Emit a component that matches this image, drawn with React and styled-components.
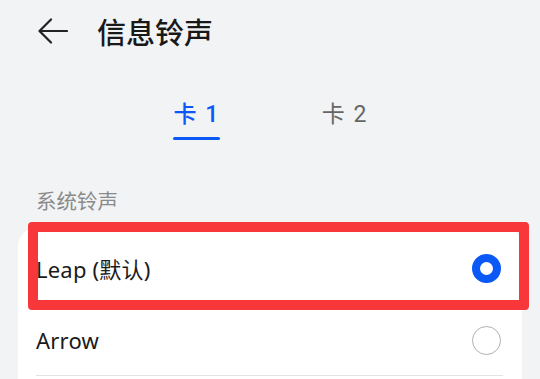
import React, { useState } from "react";
import styled, { createGlobalStyle } from "styled-components";

const Global = createGlobalStyle`
  html, body { margin: 0; padding: 0; background: #f1f3f5; }
  body { font-family: "Noto Sans", "Noto Sans CJK SC", sans-serif; }
`;

const Page = styled.div`
  width: 540px;
  height: 379px;
  overflow: hidden;
  background: #f1f3f5;
`;

const Header = styled.div`
  height: 62px;
  display: flex;
  align-items: center;
  padding-left: 38px;
  gap: 29px;
`;

const BackButton = styled.div`
  width: 30px;
  height: 28px;
  display: flex;
  align-items: center;
  justify-content: center;
`;

const Title = styled.div`
  font-family: "Noto Sans CJK SC", sans-serif;
  font-size: 29px;
  font-weight: 500;
  color: #191919;
  line-height: 36px;
`;

const Tabs = styled.div`
  display: flex;
  justify-content: center;
  padding-top: 38px;
`;

const Tab = styled.div`
  width: 148px;
  display: flex;
  flex-direction: column;
  align-items: center;
  cursor: pointer;
`;

const TabLabel = styled.div`
  font-family: Roboto, "Noto Sans CJK SC", sans-serif;
  font-size: 23px;
  line-height: 30px;
  word-spacing: 3px;
  font-weight: ${(p) => (p.$active ? 500 : 400)};
  color: ${(p) => (p.$active ? "#0a59f7" : "#666666")};
`;

const Underline = styled.div`
  margin-top: 7px;
  width: 47px;
  height: 3px;
  border-radius: 2px;
  background: ${(p) => (p.$active ? "#0a59f7" : "transparent")};
`;

const SectionLabel = styled.div`
  margin-top: 47px;
  padding-left: 36px;
  font-family: "Noto Sans CJK SC", sans-serif;
  font-size: 20.5px;
  line-height: 26px;
  color: #8a8a8a;
`;

const Card = styled.div`
  margin: 15px 18px 0;
  padding: 4px 0 24px;
  background: #ffffff;
  border-radius: 18px;
`;

const Row = styled.div`
  position: relative;
  height: 72px;
  display: flex;
  align-items: center;
  justify-content: space-between;
  padding: 0 21px 0 18px;
`;

const RowText = styled.div`
  font-family: "Noto Sans", "Noto Sans CJK SC", sans-serif;
  font-size: 22px;
  letter-spacing: 0.2px;
  color: #1a1a1a;
`;

const Divider = styled.div`
  position: absolute;
  left: 18px;
  right: 19px;
  bottom: 0;
  height: 1px;
  background: #e3e3e3;
`;

const Radio = styled.div`
  box-sizing: border-box;
  width: 29px;
  height: 29px;
  border-radius: 50%;
  border: ${(p) => (p.$checked ? "8px solid #0a59f7" : "1.5px solid #b0b0b0")};
  background: #fff;
`;

const Highlight = styled.div`
  position: absolute;
  left: 10px;
  right: -7px;
  top: -10px;
  bottom: -6px;
  border: 10px solid #f7373a;
  border-radius: 4px;
  pointer-events: none;
`;

const items = ["Leap (默认)", "Arrow"];

export default function App() {
  const [tab, setTab] = useState(0);
  const [sel, setSel] = useState(0);
  return (
    <Page>
      <Global />
      <Header>
        <BackButton>
          <svg width="30" height="26" viewBox="0 0 30 26" fill="none">
            <path d="M29 13H2M13 1.5L1.5 13L13 24.5" stroke="#222" strokeWidth="2.2" strokeLinecap="round" strokeLinejoin="round" />
          </svg>
        </BackButton>
        <Title>信息铃声</Title>
      </Header>
      <Tabs>
        {["卡 1", "卡 2"].map((t, i) => (
          <Tab key={t} onClick={() => setTab(i)}>
            <TabLabel $active={tab === i}>{t}</TabLabel>
            <Underline $active={tab === i} />
          </Tab>
        ))}
      </Tabs>
      <SectionLabel>系统铃声</SectionLabel>
      <Card>
        {items.map((it, i) => (
          <Row key={it} onClick={() => setSel(i)}>
            <RowText>{it}</RowText>
            <Radio $checked={sel === i} />
            {i > 0 && <Divider />}
            {i === 0 && <Highlight />}
          </Row>
        ))}
      </Card>
    </Page>
  );
}
